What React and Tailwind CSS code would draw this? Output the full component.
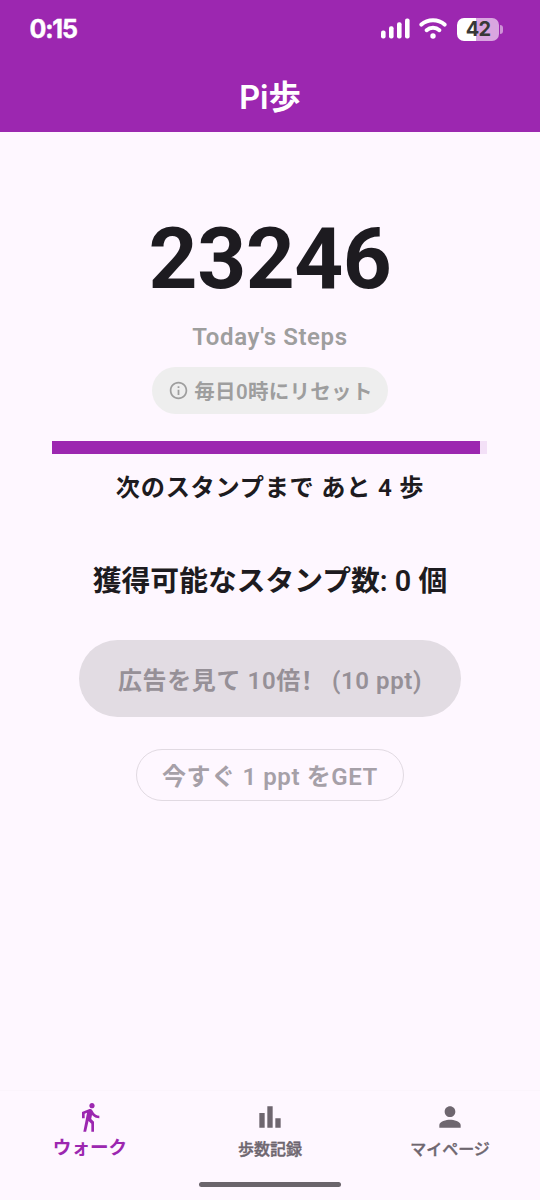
import { MdInfoOutline, MdPerson } from "react-icons/md";

function SignalIcon() {
  return (
    <svg width="30" height="22" viewBox="0 0 30 22" fill="white">
      <rect x="0" y="12.4" width="4.6" height="8.2" rx="2" />
      <rect x="8" y="8.2" width="4.6" height="12.4" rx="2" />
      <rect x="16" y="4.2" width="4.6" height="16.4" rx="2" />
      <rect x="24" y="0.4" width="4.6" height="20.2" rx="2" />
    </svg>
  );
}

function WifiIcon() {
  return (
    <svg width="28" height="22" viewBox="0 0 28 22" fill="none" stroke="white" strokeWidth="4" strokeLinecap="round">
      <path d="M2.4 6.6C8.8 .9 19.2 .9 25.6 6.6" />
      <path d="M7.6 12.2C11.2 9 16.8 9 20.4 12.2" />
      <circle cx="14" cy="18" r="2.7" fill="white" stroke="none" />
    </svg>
  );
}

function WalkIcon() {
  return (
    <svg width="32" height="32" viewBox="0 0 24 24" fill="currentColor">
      <path d="M13.5 5.5c1.1 0 2-.9 2-2s-.9-2-2-2-2 .9-2 2 .9 2 2 2zM9.8 8.9L7 23h2.1l1.8-8 2.1 2v6h2v-7.5l-2.1-2 .6-3C14.8 12 16.8 13 19 13v-2c-1.9 0-3.5-1-4.3-2.4l-1-1.6c-.4-.6-1-1-1.7-1-.3 0-.5.1-.8.1L6 8.3V13h2V9.6l1.8-.7" />
    </svg>
  );
}

function BarsIcon() {
  return (
    <svg width="32" height="32" viewBox="0 0 24 24" fill="currentColor">
      <path d="M4 9h4v11H4zM10 4h4v16h-4zM16 13h4v7h-4z" />
    </svg>
  );
}

function StatusBar() {
  return (
    <div className="flex h-[58px] items-center justify-between pl-[29.5px] pr-[37px]">
      <span className="font-[Inter] text-[25px] font-bold leading-none tracking-[-1.2px] [-webkit-text-stroke:0.4px_white]">
        0:15
      </span>
      <div className="flex items-center">
        <SignalIcon />
        <div className="ml-[8px] mr-px">
          <WifiIcon />
        </div>
        <div className="ml-[9px] flex h-[23px] w-[42px] items-center justify-center rounded-[7px] bg-[linear-gradient(to_right,#ffffff_46%,#d9a6e0_46%)] font-[Inter] text-[20px] font-bold leading-none tracking-[-0.7px] text-[#383838]">
          42
        </div>
        <div className="ml-px h-[9px] w-[3px] rounded-r-full bg-[#cf93d7]" />
      </div>
    </div>
  );
}

function NavItem({ icon, label, active }) {
  return (
    <button
      className={
        active
          ? "flex w-[180px] flex-col items-center text-[#9c27b0]"
          : "flex w-[180px] flex-col items-center text-[#6e666f]"
      }
    >
      {icon}
      <span
        className={
          active
            ? "mt-[2px] text-[18.6px] font-bold leading-[26px]"
            : "mt-[4px] text-[16px] font-medium leading-[26px] [-webkit-text-stroke:0.4px_#6e666f]"
        }
      >
        {label}
      </span>
    </button>
  );
}

export default function App() {
  return (
    <div className="flex h-[1200px] w-[540px] flex-col bg-[#fef7ff] font-[Roboto,'Noto_Sans_CJK_JP',sans-serif] text-[#1d1b20]">
      <header className="h-[132px] bg-[#9c27b0] text-white">
        <StatusBar />
        <h1 className="mt-[19px] text-center text-[32.4px] font-semibold leading-[42px]">Pi歩</h1>
      </header>

      <main className="flex flex-1 flex-col items-center whitespace-nowrap">
        <div className="mt-[77px] text-[85.5px] font-bold leading-[100px] tracking-[-0.5px]">23246</div>
        <div className="mt-[12px] text-[24px] font-semibold leading-[32px] tracking-[0.6px] text-[#9e9e9e]">
          Today's Steps
        </div>
        <div className="mt-[14px] flex h-[47px] w-[236px] items-center justify-center gap-[5px] rounded-full bg-[#eeeeee] pl-px text-[#9e9e9e]">
          <MdInfoOutline size={21} />
          <span className="mt-[2px] text-[20.5px] font-semibold leading-[28px] tracking-[0.3px]">毎日0時にリセット</span>
        </div>

        {/* progress to the next stamp */}
        <div className="mr-px mt-[27px] h-[13px] w-[435px] bg-[#f3e0f7]">
          <div className="h-full w-[428px] bg-[#9c27b0]" />
        </div>
        <div className="mt-[17px] text-[24.2px] font-semibold leading-[34px] tracking-[0.75px]">
          次のスタンプまで あと 4 歩
        </div>
        <div className="mt-[55px] text-[28.8px] font-semibold leading-[42px]">
          獲得可能なスタンプ数: 0 個
        </div>

        <button className="mt-[38px] h-[77px] w-[382px] rounded-full bg-[#e2dce3] pt-[2px] text-[24px] font-semibold text-[#969097] tracking-[0.6px]">
          広告を見て 10倍<span className="font-['Noto_Sans_CJK_SC']">！</span> (10 ppt)
        </button>
        <button className="mt-[32px] h-[52px] w-[268px] rounded-full border border-[#e1dae2] pt-[3px] text-[24px] font-semibold text-[#a6a0a8] tracking-[0.6px]">
          今すぐ 1 ppt をGET
        </button>
      </main>

      <nav className="flex h-[110px] flex-col border-t border-[#fbf4fc]">
        <div className="flex items-start pt-[10px]">
          <NavItem icon={<WalkIcon />} label="ウォーク" active />
          <NavItem icon={<BarsIcon />} label="歩数記録" />
          <NavItem icon={<MdPerson size={32} />} label="マイページ" />
        </div>
        <div className="mx-auto mb-[13px] mt-auto h-[5px] w-[142px] rounded-full bg-[#6a646b]" />
      </nav>
    </div>
  );
}
